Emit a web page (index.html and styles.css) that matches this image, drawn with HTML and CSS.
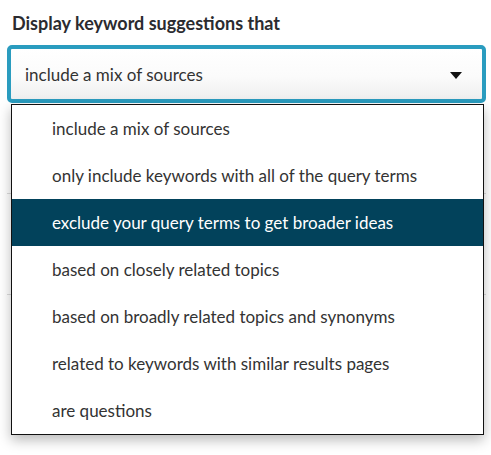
FILE: index.html
```html
<!DOCTYPE html>
<html>
<head>
<meta charset="utf-8">
<link rel="stylesheet" href="styles.css">
</head>
<body>
<div class="page">
  <div class="field-label">Display keyword suggestions that</div>
  <div class="select-wrap">
    <div class="select">
      <span class="select-value">include a mix of sources</span>
      <span class="caret"></span>
    </div>
    <div class="behind">
      <div class="behind-row r1"></div>
      <div class="behind-row r2"></div>
      <div class="behind-row r3"></div>
    </div>
    <ul class="menu">
      <li class="option">include a mix of sources</li>
      <li class="option">only include keywords with all of the query terms</li>
      <li class="option active">exclude your query terms to get broader ideas</li>
      <li class="option">based on closely related topics</li>
      <li class="option">based on broadly related topics and synonyms</li>
      <li class="option">related to keywords with similar results pages</li>
      <li class="option">are questions</li>
    </ul>
  </div>
</div>
</body>
</html>
```

FILE: styles.css
```css
* { box-sizing: border-box; }
html, body { margin: 0; padding: 0; background: #fff; }
body {
  font-family: Lato, "Open Sans", sans-serif;
  color: #333;
  width: 491px;
  height: 455px;
  overflow: hidden;
}
.page {
  padding: 12px 5px 0 7px;
}
.field-label {
  font-weight: 700;
  font-size: 18px;
  line-height: 22px;
  color: #2b2b30;
  padding-left: 5px;
  margin-bottom: 11px;
}
.select-wrap {
  position: relative;
  width: 479px;
}
.select {
  height: 58px;
  border: 4px solid #2a9cbf;
  border-radius: 5px;
  background: linear-gradient(#ffffff 0%, #fbfbfb 55%, #efefef 100%);
  display: flex;
  align-items: center;
  justify-content: space-between;
  padding: 0 20px 0 14px;
}
.select-value {
  font-size: 17px;
  color: #333;
}
.caret {
  width: 0;
  height: 0;
  border-left: 6px solid transparent;
  border-right: 6px solid transparent;
  border-top: 7px solid #111;
  margin-top: 2px;
}
.behind {
  height: 340px;
  display: flex;
  flex-direction: column;
}
.behind-row {
  border-bottom: 1px solid #dcdcdc;
}
.r1 { height: 91px; }
.r2 { height: 101px; }
.r3 { height: 0; border: 0; }
.menu {
  position: absolute;
  top: 59px;
  left: 4px;
  width: 473px;
  margin: 0;
  padding: 0;
  list-style: none;
  background: #fff;
  border: 1px solid #111;
  box-shadow: 0 5px 12px rgba(0, 0, 0, 0.28);
}
.option {
  height: 47px;
  display: flex;
  align-items: center;
  padding-left: 40px;
  font-size: 17px;
  color: #333;
}
.option.active {
  background: #02425b;
  color: #fff;
}
```
